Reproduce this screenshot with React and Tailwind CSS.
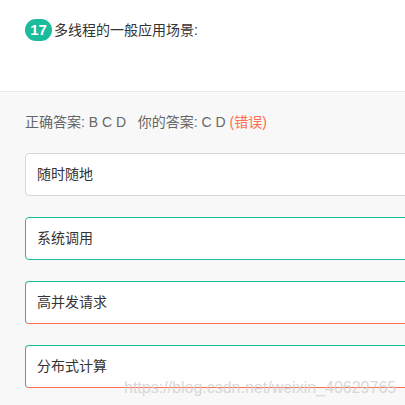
import React from 'react';

const Option = ({ className, children }) => (
  <div
    className={
      'w-[420px] h-[43px] bg-white border rounded-[4px] flex items-center pl-[11px] text-[14px] text-[#333] ' +
      className
    }
  >
    {children}
  </div>
);

const App = () => {
  return (
    <div
      className="relative w-[405px] h-[405px] overflow-hidden bg-[#f8f8f8]"
      style={{ fontFamily: '"Liberation Sans", "Noto Sans CJK SC", sans-serif' }}
    >
      {/* Question header */}
      <div className="h-[92px] bg-white border-b border-[#e8e8e8] pt-[19px] pl-[25px]">
        <div className="flex items-center">
          <span className="w-[27px] h-[22px] rounded-full bg-[#1abc9c] text-white text-[15px] font-bold flex items-center justify-center">
            17
          </span>
          <span className="ml-[2px] text-[14px] text-[#333]">多线程的一般应用场景:</span>
        </div>
      </div>

      {/* Answers */}
      <div className="pl-[25px] pt-[20px]">
        <div className="h-[20px] flex items-center text-[14px] text-[#666] whitespace-pre">
          正确答案: B C D   你的答案: C D <span className="text-[#ff6c4f]">(错误)</span>
        </div>

        <div className="mt-[21px] flex flex-col gap-[21px]">
          <Option className="border-[#d6d6d6]">随时随地</Option>
          <Option className="border-[#1abc9c]">系统调用</Option>
          <Option className="border-[#1abc9c] border-b-[#ff6c4f]">高并发请求</Option>
          <Option className="border-[#1abc9c] border-b-[#ff6c4f]">分布式计算</Option>
        </div>
      </div>

      {/* Watermark */}
      <div className="absolute left-[124px] top-[376px] text-[16px] text-[#d0d0d0] opacity-80 whitespace-nowrap">
        https://blog.csdn.net/weixin_40629765
      </div>
    </div>
  );
};

export default App;
